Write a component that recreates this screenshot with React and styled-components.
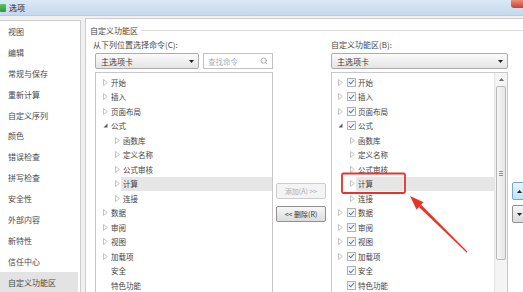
import React from "react";
import styled, { createGlobalStyle } from "styled-components";
import { Search } from "lucide-react";

const GlobalStyle = createGlobalStyle`
  html, body {
    margin: 0;
    padding: 0;
    background: #f0f0f0;
  }
  body {
    font-family: "Noto Sans CJK SC", "Noto Sans", sans-serif;
    color: #444;
  }
`;

const Window = styled.div`
  position: relative;
  width: 523px;
  height: 292px;
  overflow: hidden;
  background: #f0f0f0;
  display: flex;
  flex-direction: column;
`;

const TitleBar = styled.div`
  height: 15px;
  flex: none;
  display: flex;
  align-items: center;
  background: linear-gradient(#dbe8f6, #c4d8ef);
  border-bottom: 1px solid #b9cbe0;
`;

const AppIcon = styled.div`
  width: 6px;
  height: 8px;
  border-radius: 1px;
  background: linear-gradient(#5fc45a, #2f9a35);
`;

const TitleText = styled.span`
  margin-left: 3px;
  font-size: 8px;
  color: #1e1e1e;
`;

const CloseButton = styled.div`
  margin-left: auto;
  align-self: flex-start;
  width: 12px;
  height: 8px;
  border-radius: 0 0 0 3px;
  background: linear-gradient(#e98d7d, #c9402a);
`;

const Body = styled.div`
  flex: 1;
  display: flex;
  gap: 4px;
  padding-top: 2px;
  min-height: 0;
`;

const Sidebar = styled.div`
  width: 80px;
  flex: none;
  margin-top: 2px;
  background: #fff;
  border-top: 1px solid #cdcdcd;
  border-right: 1px solid #cdcdcd;
`;

const SideItem = styled.div`
  height: 20.9px;
  display: flex;
  align-items: center;
  padding-left: 8px;
  font-size: 8px;
  color: #4a4a4a;
  background: ${({ active }) => (active ? "#e3e3e3" : "transparent")};
  margin-right: ${({ active }) => (active ? "2px" : "0")};
`;

const Main = styled.div`
  flex: 1;
  background: #fff;
  border-top: 1px solid #cdcdcd;
  border-left: 1px solid #cdcdcd;
  padding: 6px 0 0 4px;
  min-width: 0;
`;

const GroupHeader = styled.div`
  height: 11px;
  display: flex;
  align-items: center;
  gap: 3px;
  font-size: 8px;
  color: #4a4a4a;

  &::after {
    content: "";
    flex: 1;
    height: 1px;
    background: #dcdcdc;
  }
`;

const Columns = styled.div`
  display: flex;
  margin-top: 3px;
  margin-left: 5px;
`;

const Column = styled.div`
  width: ${({ w }) => w}px;
  flex: none;
  margin-left: ${({ gap }) => gap || 0}px;
`;

const ColLabel = styled.div`
  height: 12px;
  line-height: 12px;
  font-size: 8px;
  color: #4a4a4a;
  margin-left: ${({ shift }) => shift || 0}px;
`;

const PickerRow = styled.div`
  display: flex;
  gap: 4px;
  height: 16px;
  margin-top: 2px;
`;

const Dropdown = styled.div`
  box-sizing: border-box;
  width: ${({ w }) => (w ? `${w}px` : "100%")};
  flex: none;
  height: 16px;
  display: flex;
  align-items: center;
  justify-content: space-between;
  padding: 0 4px 0 5px;
  border: 1px solid #acacac;
  border-radius: 2px;
  background: linear-gradient(#fbfbfb, #e4e4e4);
  font-size: 8px;
  color: #3a3a3a;
`;

const SearchBox = styled.div`
  box-sizing: border-box;
  flex: 1;
  height: 16px;
  display: flex;
  align-items: center;
  justify-content: space-between;
  padding: 0 4px;
  border: 1px solid #c2c2c2;
  background: #fff;
  font-size: 7.5px;
  color: #b0b0b0;
`;

const TreeBox = styled.div`
  box-sizing: border-box;
  margin-top: 3px;
  height: 232px;
  border: 1px solid #c8c8c8;
  background: #fff;
  display: flex;
`;

const TreeList = styled.div`
  flex: 1;
  padding-top: 2px;
  min-width: 0;
`;

const Row = styled.div`
  height: 14.5px;
  display: flex;
  align-items: center;
  padding-left: ${({ indent }) => indent}px;
`;

const ArrowSlot = styled.span`
  width: 8px;
  flex: none;
  display: flex;
  align-items: center;
  padding-left: 2px;
  box-sizing: border-box;
`;

const Check = styled.span`
  box-sizing: border-box;
  width: 9px;
  height: 9px;
  flex: none;
  margin-left: 3px;
  border: 1px solid #b2b2b2;
  background: linear-gradient(#f0f0f0, #ffffff);
  display: flex;
  align-items: center;
  justify-content: center;
`;

const Label = styled.span`
  flex: 1;
  height: 14px;
  display: flex;
  align-items: center;
  padding-left: 2px;
  font-size: 7.5px;
  color: #444;
  background: ${({ selected }) => (selected ? "#e6e6e6" : "transparent")};
`;

const Scrollbar = styled.div`
  width: 12px;
  flex: none;
  background: #f4f4f4;
  border-left: 1px solid #e4e4e4;
  display: flex;
  flex-direction: column;
  align-items: center;
`;

const ScrollArrow = styled.div`
  height: 12px;
  display: flex;
  align-items: center;
  justify-content: center;
`;

const Thumb = styled.div`
  box-sizing: border-box;
  width: 10px;
  height: 174px;
  margin-top: 1px;
  border: 1px solid #b8b8b8;
  border-radius: 2px;
  background: linear-gradient(90deg, #f6f6f6, #e6e6e6);
  display: flex;
  flex-direction: column;
  align-items: center;
  justify-content: center;
  gap: 1px;

  span {
    width: 4px;
    height: 1px;
    background: #909090;
  }
`;

const ButtonStack = styled.div`
  display: flex;
  flex-direction: column;
  gap: ${({ gap }) => gap}px;
  padding-top: ${({ top }) => top}px;
`;

const MoveButton = styled.div`
  box-sizing: border-box;
  height: 16px;
  display: flex;
  align-items: center;
  justify-content: center;
  border-radius: 2px;
  font-size: 7px;
  border: 1px solid ${({ disabled }) => (disabled ? "#cdcdcd" : "#919191")};
  color: ${({ disabled }) => (disabled ? "#acacac" : "#333")};
  background: ${({ disabled }) =>
    disabled ? "#f4f4f4" : "linear-gradient(#f7f7f7, #dcdcdc)"};
`;

const OrderButton = styled.div`
  box-sizing: border-box;
  width: 16px;
  height: 18px;
  display: flex;
  align-items: center;
  padding-left: 4px;
  border-radius: 2px;
  border: 1px solid ${({ hot }) => (hot ? "#72a9db" : "#919191")};
  background: ${({ hot }) =>
    hot ? "linear-gradient(#e8f4fd, #c3e1f7)" : "linear-gradient(#f7f7f7, #dadada)"};
`;

const Overlay = styled.svg`
  position: absolute;
  left: 0;
  top: 0;
  pointer-events: none;
`;

const Caret = ({ up, color = "#222" }) => (
  <svg width="5" height="3" viewBox="0 0 5 3">
    <polygon points={up ? "0,3 5,3 2.5,0" : "0,0 5,0 2.5,3"} fill={color} />
  </svg>
);

const Expander = ({ open }) =>
  open ? (
    <svg width="5" height="5" viewBox="0 0 5 5">
      <polygon points="4.5,0.5 4.5,4.5 0.5,4.5" fill="#5a5a5a" />
    </svg>
  ) : (
    <svg width="5" height="7" viewBox="0 0 5 7">
      <polygon points="0.5,0.5 4.3,3.5 0.5,6.5" fill="none" stroke="#bcbcbc" strokeWidth="0.9" />
    </svg>
  );

const Tick = () => (
  <svg width="7" height="6" viewBox="0 0 7 6">
    <polyline points="1,3 2.8,4.8 6,1" fill="none" stroke="#4a7cc0" strokeWidth="1.1" />
  </svg>
);

const sideItems = [
  "视图",
  "编辑",
  "常规与保存",
  "重新计算",
  "自定义序列",
  "颜色",
  "错误检查",
  "拼写检查",
  "安全性",
  "外部内容",
  "新特性",
  "信任中心",
  "自定义功能区",
];

const tree = [
  { label: "开始", arrow: "closed" },
  { label: "插入", arrow: "closed" },
  { label: "页面布局", arrow: "closed" },
  { label: "公式", arrow: "open" },
  { label: "函数库", arrow: "closed", child: true },
  { label: "定义名称", arrow: "closed", child: true },
  { label: "公式审核", arrow: "closed", child: true },
  { label: "计算", arrow: "closed", child: true, selected: true },
  { label: "连接", arrow: "closed", child: true },
  { label: "数据", arrow: "closed" },
  { label: "审阅", arrow: "closed" },
  { label: "视图", arrow: "closed" },
  { label: "加载项", arrow: "closed" },
  { label: "安全" },
  { label: "特色功能" },
];

const TreeRow = ({ item, checks }) => {
  const indent = checks ? (item.child ? 16 : 4) : item.child ? 17 : 5;
  return (
    <Row indent={indent}>
      <ArrowSlot>{item.arrow && <Expander open={item.arrow === "open"} />}</ArrowSlot>
      {checks && !item.child && (
        <Check>
          <Tick />
        </Check>
      )}
      <Label selected={item.selected}>{item.label}</Label>
    </Row>
  );
};

export default function App() {
  return (
    <>
      <GlobalStyle />
      <Window>
        <TitleBar>
          <AppIcon />
          <TitleText>选项</TitleText>
          <CloseButton />
        </TitleBar>
        <Body>
          <Sidebar>
            {sideItems.map((s, i) => (
              <SideItem key={s} active={i === sideItems.length - 1}>
                {s}
              </SideItem>
            ))}
          </Sidebar>
          <Main>
            <GroupHeader>自定义功能区</GroupHeader>
            <Columns>
              <Column w={178}>
                <ColLabel shift={-2}>从下列位置选择命令(C):</ColLabel>
                <PickerRow>
                  <Dropdown w={104}>
                    主选项卡
                    <Caret />
                  </Dropdown>
                  <SearchBox>
                    查找命令
                    <Search size={8} color="#8a8a8a" strokeWidth={2} />
                  </SearchBox>
                </PickerRow>
                <TreeBox>
                  <TreeList>
                    {tree.map((t, i) => (
                      <TreeRow key={i} item={t} />
                    ))}
                  </TreeList>
                </TreeBox>
              </Column>

              <Column w={50} gap={3}>
                <ButtonStack top={144} gap={7}>
                  <MoveButton disabled>添加(A) &gt;&gt;</MoveButton>
                  <MoveButton>&lt;&lt; 删除(R)</MoveButton>
                </ButtonStack>
              </Column>

              <Column w={177} gap={5}>
                <ColLabel>自定义功能区(B):</ColLabel>
                <PickerRow>
                  <Dropdown>
                    主选项卡
                    <Caret />
                  </Dropdown>
                </PickerRow>
                <TreeBox>
                  <TreeList>
                    {tree.map((t, i) => (
                      <TreeRow key={i} item={t} checks />
                    ))}
                  </TreeList>
                  <Scrollbar>
                    <ScrollArrow>
                      <Caret up color="#6a6a6a" />
                    </ScrollArrow>
                    <Thumb>
                      <span />
                      <span />
                      <span />
                    </Thumb>
                  </Scrollbar>
                </TreeBox>
              </Column>

              <Column w={16} gap={4}>
                <ButtonStack top={143} gap={5}>
                  <OrderButton hot>
                    <Caret up />
                  </OrderButton>
                  <OrderButton>
                    <Caret />
                  </OrderButton>
                </ButtonStack>
              </Column>
            </Columns>
          </Main>
        </Body>

        <Overlay width="523" height="292" viewBox="0 0 523 292">
          <rect x="342" y="173.5" width="63" height="19.5" rx="1.5" fill="none" stroke="#e8322a" strokeWidth="1.8" />
          <polygon points="410,196 423.5,202.2 416.5,209.4" fill="#e8322a" />
          <polygon points="421.1,204.7 418.9,206.9 466.6,252.4 467.4,251.6" fill="#e8322a" />
        </Overlay>
      </Window>
    </>
  );
}
